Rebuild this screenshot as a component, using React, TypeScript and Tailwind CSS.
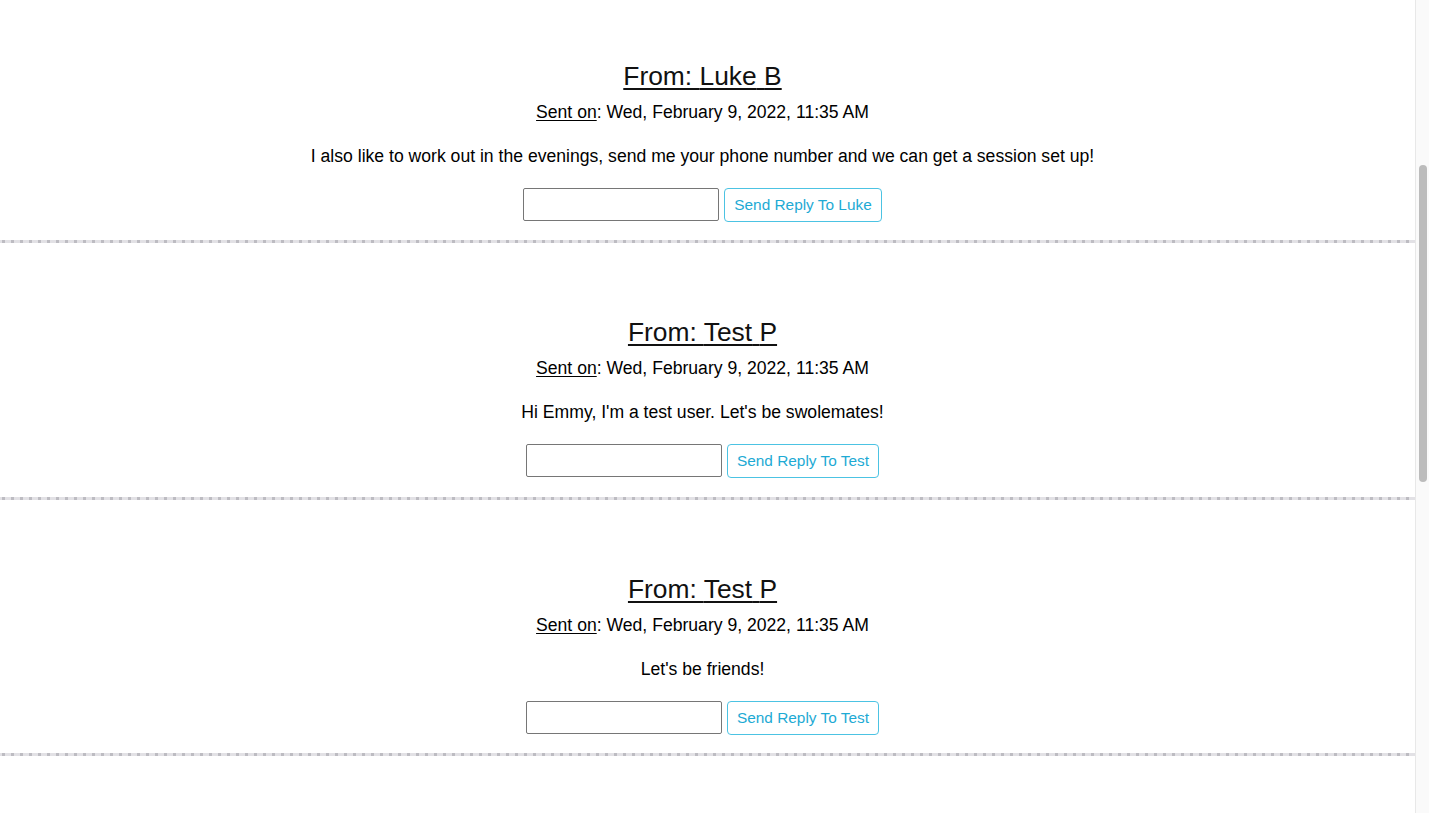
const messages = [
  {
    id: 1,
    firstName: "Luke",
    lastName: "B",
    sentOn: "Wed, February 9, 2022, 11:35 AM",
    body: "I also like to work out in the evenings, send me your phone number and we can get a session set up!",
  },
  {
    id: 2,
    firstName: "Test",
    lastName: "P",
    sentOn: "Wed, February 9, 2022, 11:35 AM",
    body: "Hi Emmy, I'm a test user. Let's be swolemates!",
  },
  {
    id: 3,
    firstName: "Test",
    lastName: "P",
    sentOn: "Wed, February 9, 2022, 11:35 AM",
    body: "Let's be friends!",
  },
];

function MessageCard({ msg }: { msg: (typeof messages)[number] }) {
  return (
    <div className="text-black">
      <div className="flex flex-col items-center pr-[10px] text-center">
        <h2 className="mt-[74px] text-[26.4px] leading-[30px] underline underline-offset-[3px] decoration-[1.5px] text-[#111]">
          From: {msg.firstName} {msg.lastName}
        </h2>
        <p className="mt-[11px] text-[17.6px] leading-[20px]">
          <span className="underline underline-offset-2 decoration-1">Sent on</span>: {msg.sentOn}
        </p>
        <p className="mt-[24px] text-[17.6px] leading-[20px]">{msg.body}</p>
        <form className="mt-[22px] flex h-[34px] items-center gap-[5px]" onSubmit={(e) => e.preventDefault()}>
          <input
            type="text"
            className="mb-[1px] h-[33px] w-[196px] rounded-[2px] border border-[#767676] bg-white px-2 text-[15px] outline-none"
          />
          <button
            type="submit"
            className="h-[34px] rounded-[4px] border border-[#4cc3e3] bg-white px-[9px] text-[15.4px] leading-none text-[#1eaad4]"
          >
            Send Reply To {msg.firstName}
          </button>
        </form>
      </div>
      {/* dotted divider */}
      <div className="mt-[18.5px] h-[3px] w-full bg-[repeating-linear-gradient(90deg,#e2e1e5_0_2px,#bdbcc2_2px_5px,#e2e1e5_5px_9px)]" />
    </div>
  );
}

export default function App() {
  return (
    <div className="flex h-[813px] w-full overflow-hidden bg-white font-['Liberation_Sans',Arial,sans-serif]">
      <main className="h-full flex-1 overflow-hidden">
        <div className="-mt-[13.5px]">
          {messages.map((m) => (
            <MessageCard key={m.id} msg={m} />
          ))}
        </div>
      </main>

      {/* scrollbar */}
      <aside className="h-full w-[14px] shrink-0 border-l border-[#e8e8e8] bg-[#fafafa]">
        <div className="mx-auto mt-[165px] h-[317px] w-[8px] rounded-full bg-[#bcbcbc]" />
      </aside>
    </div>
  );
}
